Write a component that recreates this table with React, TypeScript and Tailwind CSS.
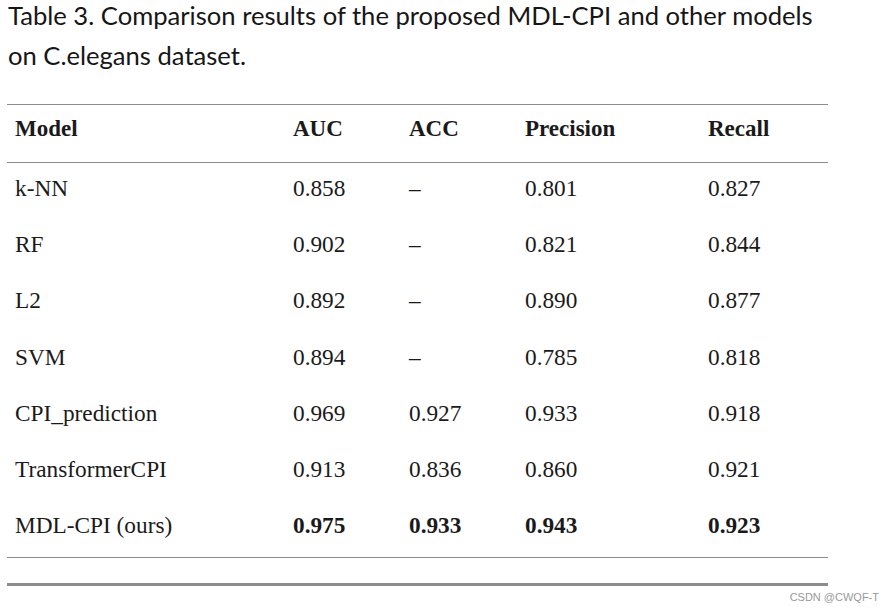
const columns = ["Model", "AUC", "ACC", "Precision", "Recall"];

const rows: { model: string; values: string[]; best?: boolean }[] = [
  { model: "k-NN", values: ["0.858", "–", "0.801", "0.827"] },
  { model: "RF", values: ["0.902", "–", "0.821", "0.844"] },
  { model: "L2", values: ["0.892", "–", "0.890", "0.877"] },
  { model: "SVM", values: ["0.894", "–", "0.785", "0.818"] },
  { model: "CPI_prediction", values: ["0.969", "0.927", "0.933", "0.918"] },
  { model: "TransformerCPI", values: ["0.913", "0.836", "0.860", "0.921"] },
  { model: "MDL-CPI (ours)", values: ["0.975", "0.933", "0.943", "0.923"], best: true },
];

const grid = "grid grid-cols-[278px_116px_116px_183px_128px]";

export default function App() {
  return (
    <div className="relative w-[894px] h-[610px] bg-white overflow-hidden">
      <div className="mt-[-5px] pl-[8px] font-['Lato',sans-serif] text-[25.6px] leading-[40px] text-[#161616]">
        Table 3. Comparison results of the proposed MDL-CPI and other models
        <br />
        on C.elegans dataset.
      </div>

      <div className="ml-[7px] mt-[29px] w-[821px] font-['Liberation_Serif',serif] text-[#1a1a1a]">
        <div className="h-px bg-[#8c8c8c]" />
        <div className={`${grid} h-[57px] items-center pb-[8px]`}>
          {columns.map((c) => (
            <div key={c} className="pl-[8px] text-[23px] font-bold">
              {c}
            </div>
          ))}
        </div>
        <div className="h-px bg-[#8c8c8c]" />

        {rows.map((r) => (
          <div key={r.model} className={`${grid} h-[56.3px] items-center pb-[6px] text-[23.3px]`}>
            <div className="pl-[8px]">{r.model}</div>
            {r.values.map((v, i) => (
              <div key={i} className={`pl-[8px] ${r.best ? "font-bold" : ""}`}>
                {v}
              </div>
            ))}
          </div>
        ))}

        <div className="h-px bg-[#8c8c8c]" />
        <div className="mt-[25px] h-[3px] bg-[#8c8c8c]" />
      </div>

      <div className="flex justify-end pr-[15px] pt-[4px] font-['Liberation_Sans',sans-serif] text-[11px] leading-[14px] text-[#9a9a9a]">
        CSDN @CWQF-T
      </div>
    </div>
  );
}
